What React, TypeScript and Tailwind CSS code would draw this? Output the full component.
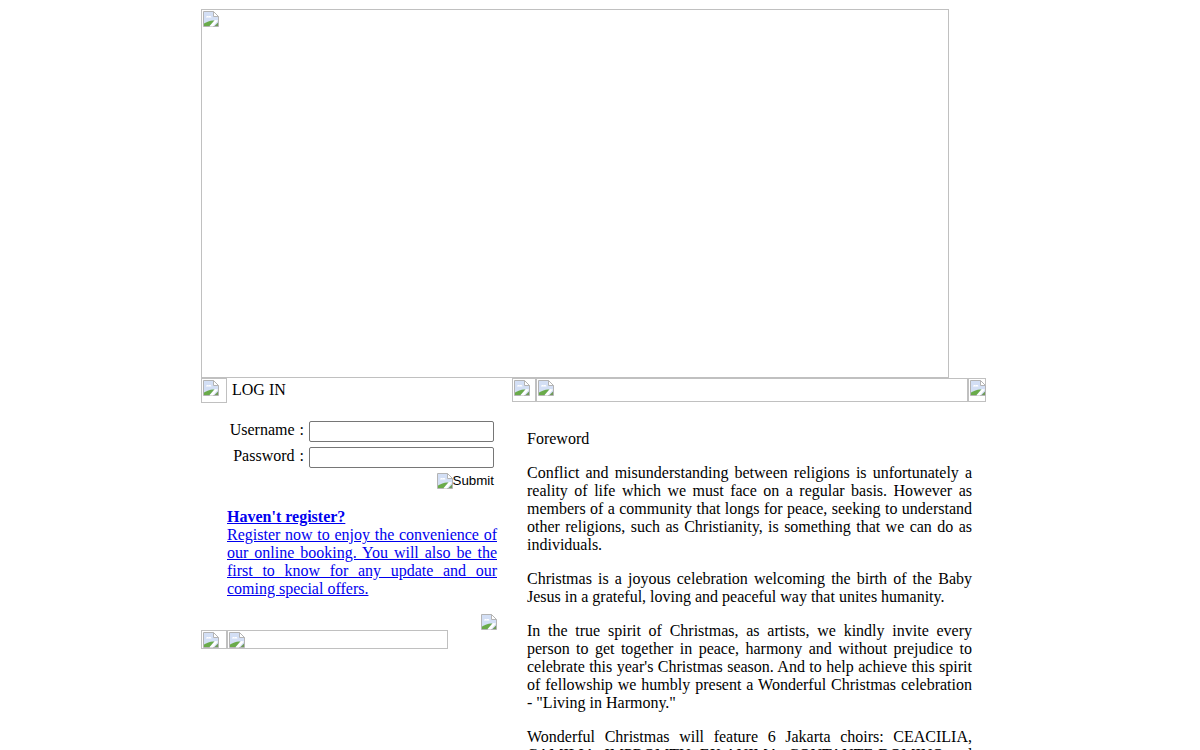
const BrokenImage = () => (
  <svg width="16" height="16" viewBox="0 0 16 16" className="block shrink-0">
    <path d="M0.500 0.500H10.500L15.500 5.500V15.500H0.500Z" fill="#d3dff5" stroke="#b4b4b4" />
    <path d="M10.500 0.500V5.500H15.500Z" fill="#fff" stroke="#b4b4b4" />
    <path d="M3 6.500c0-1.200 1.600-1.800 2.600-1.100C6.500 4.700 8.300 5 8.500 6.500Z" fill="#fff" />
    <path d="M1 15V12.500C4 10.500 8 9 11.500 9.500L6.500 15Z" fill="#6aab4a" />
    <path d="M6.500 15.500L12 9L15 9.500L10 15.500Z" fill="#fff" />
    <path d="M11.500 15L15 11.500V15Z" fill="#6f9a58" />
  </svg>
);

// empty bordered box standing in for an image that failed to load
const ImageBox = ({ className }: { className: string }) => (
  <div className={`border border-[#c0c0c0] p-[1px] ${className}`}>
    <BrokenImage />
  </div>
);

const LoginField = ({ label }: { label: string }) => (
  <div className="flex items-start justify-end h-[26px]">
    <span className="mr-[5px] pt-[4px] [word-spacing:1px]">{label}</span>
    <input type="text" className="w-[185px] h-[21px] mt-[4px] bg-white border border-[#767676] rounded-[2px]" />
  </div>
);

export default function App() {
  return (
    <div className="h-[750px] overflow-hidden bg-white text-black text-[16px] leading-[18px] font-['Liberation_Serif',serif]">
      <div className="w-[785px] ml-[201px] pt-[9px]">
        <ImageBox className="w-[748px] h-[369px]" />

        <div className="flex">
          <div className="w-[311px]">
            <div className="flex h-[25px]">
              <ImageBox className="w-[26px] h-[25px]" />
              <span className="ml-[5px] pt-[3px]">LOG IN</span>
            </div>

            <div className="w-[293px] mt-[14px]">
              <LoginField label="Username :" />
              <LoginField label="Password :" />
              <div className="flex justify-end items-center mt-[1px] h-[22px] text-[13.333px] font-['Liberation_Sans',sans-serif]">
                <BrokenImage />
                <span>Submit</span>
              </div>
            </div>

            <a href="#" className="block w-[270px] ml-[26px] mt-[16px] text-[#0000ee] underline text-justify">
              <b>Haven't register?</b>
              <br />
              Register now to enjoy the convenience of our online booking. You will also be the first to know for any update and our coming special offers.
            </a>

            <div className="w-[296px] flex justify-end mt-[16px]">
              <BrokenImage />
            </div>

            <div className="flex">
              <ImageBox className="w-[26px] h-[19px]" />
              <ImageBox className="w-[221px] h-[19px]" />
            </div>
          </div>

          <div className="w-[474px]">
            <div className="flex h-[24px]">
              <ImageBox className="w-[24px] h-[24px]" />
              <ImageBox className="w-[432px] h-[24px]" />
              <ImageBox className="w-[18px] h-[24px]" />
            </div>

            <div className="w-[445px] ml-[15px] mt-[28px] text-justify">
              <p>Foreword</p>
              <p className="mt-[16px]">
                Conflict and misunderstanding between religions is unfortunately a reality of life which we must face on a regular basis. However as members of a community that longs for peace, seeking to understand other religions, such as Christianity, is something that we can do as individuals.
              </p>
              <p className="mt-[16px]">
                Christmas is a joyous celebration welcoming the birth of the Baby Jesus in a grateful, loving and peaceful way that unites humanity.
              </p>
              <p className="mt-[16px]">
                In the true spirit of Christmas, as artists, we kindly invite every person to get together in peace, harmony and without prejudice to celebrate this year's Christmas season. And to help achieve this spirit of fellowship we humbly present a Wonderful Christmas celebration - "Living in Harmony."
              </p>
              <p className="mt-[16px] [text-align-last:justify]">
                Wonderful Christmas will feature 6 Jakarta choirs: CEACILIA, CAMILIA, IMPROMTU, EX ANIMA, CONTANTE DOMINO and
              </p>
            </div>
          </div>
        </div>
      </div>
    </div>
  );
}
